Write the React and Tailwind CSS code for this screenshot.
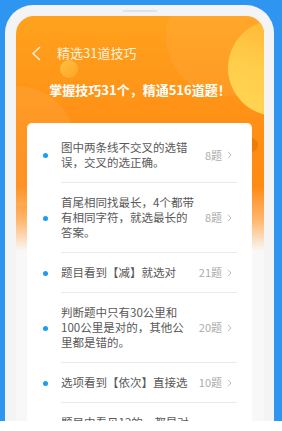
import React from "react";

const items = [
  { lines: ["图中两条线不交叉的选错", "误，交叉的选正确。"], count: "8题" },
  { lines: ["首尾相同找最长，4个都带", "有相同字符，就选最长的", "答案。"], count: "8题" },
  { lines: ["题目看到【减】就选对"], count: "21题" },
  { lines: ["判断题中只有30公里和", "100公里是对的，其他公", "里都是错的。"], count: "20题" },
  { lines: ["选项看到【依次】直接选"], count: "10题" },
  { lines: ["题目中看见12的，都是对", "的。"], count: "12题" },
];

function Row({ lines, count }) {
  return (
    <div className="flex items-center">
      <div className="ml-[16px] w-[5px] h-[5px] rounded-full bg-[#1e9cf0] shrink-0" />
      <div className="flex-1 ml-[13px] mr-[15px] border-b border-[#ebebeb] py-[12px] flex items-center">
        <div className="text-[11.5px] leading-[15px] text-[#585858]">
          {lines.map((l, i) => (
            <div key={i} className="whitespace-nowrap">{l}</div>
          ))}
        </div>
        <div className="flex-1" />
        <div className="text-[11px] leading-[15px] text-[#ababab]">{count}</div>
        <svg width="5" height="8" viewBox="0 0 5 8" className="ml-[5px] mr-[5px]">
          <path d="M1 0.8 L4 4 L1 7.2" fill="none" stroke="#bdbdbd" strokeWidth="1" />
        </svg>
      </div>
    </div>
  );
}

export default function App() {
  return (
    <div className="w-[282px] h-[431px] bg-white overflow-hidden" style={{ fontFamily: '"Noto Sans CJK SC", "Noto Sans", sans-serif' }}>
      <div className="h-[421px] bg-[#2e96f0] pt-[5px] pl-[5px] pr-[8px] overflow-hidden">
        <div className="h-[416px] bg-[#f4f4f4] rounded-t-[28px] pt-[5px] pl-[11px] pr-[10px] overflow-hidden">
          <div className="mx-auto w-[34px] h-[2px] rounded-full bg-[#e2e2e2]" />
          <div className="mt-[4px] h-[420px] rounded-t-[18px] overflow-hidden relative bg-[linear-gradient(180deg,#ffa21d_0px,#ff8f15_110px,#ff8a12_170px,#ffb870_205px,#f8f8f8_235px)]">
            {/* decorations */}
            <div className="absolute left-[150px] top-[-40px] w-[120px] h-[120px] rounded-full bg-[#ffffff]/[0.06]" />
            <div className="absolute left-[-60px] top-[70px] w-[120px] h-[120px] rounded-full bg-[#ffffff]/[0.07]" />
            <div className="absolute left-[212px] top-[4px] w-[96px] h-[96px] rounded-full bg-[linear-gradient(200deg,#ffb02c_0%,#ffcd4a_55%,#ffd655_100%)]" />
            <div className="absolute left-[44px] top-[44px] w-[18px] h-[18px] rounded-full bg-[linear-gradient(135deg,#ffc84a_0%,#ffa82a_100%)] opacity-80" />
            <div className="absolute left-[228px] top-[122px] w-[14px] h-[14px] rounded-full bg-[#f27a08]" />

            <div className="relative">
              <div className="mt-[29px] h-[16px] flex items-center">
                <svg width="10" height="15" viewBox="0 0 10 15" className="ml-[15px]">
                  <path d="M9 1 L2 7.5 L9 14" fill="none" stroke="#ffffff" strokeOpacity="0.85" strokeWidth="1.4" />
                </svg>
                <div className="ml-[16px] text-[13px] leading-[16px] text-[#fff1dc]">精选31道技巧</div>
              </div>
              <div className="mt-[20px] h-[18px] text-center text-[13px] leading-[18px] font-bold text-white">
                掌握技巧31个，精通516道题！
              </div>
              <div className="mt-[24px] ml-[11px] mr-[12px] bg-white rounded-[5px] pt-[5px] relative">
                {items.map((it, i) => (
                  <Row key={i} {...it} />
                ))}
              </div>
            </div>
          </div>
        </div>
      </div>
    </div>
  );
}
